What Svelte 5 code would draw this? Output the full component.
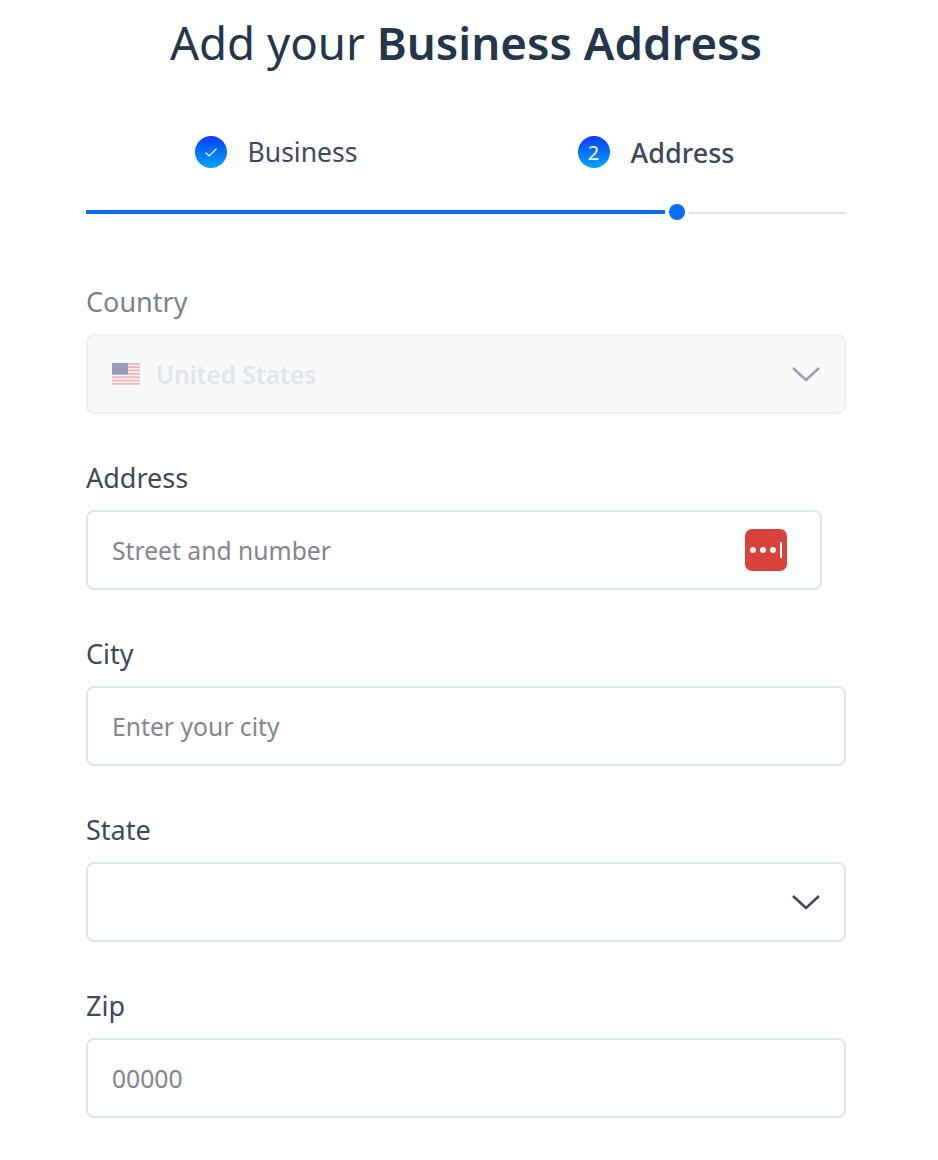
<script lang="ts">
  const usStripes = [0, 2, 4, 6, 8, 10, 12];
</script>

<div class="page">
  <h1>Add your <strong>Business Address</strong></h1>

  <div class="steps">
    <div class="step">
      <span class="badge">
        <svg width="14" height="14" viewBox="0 0 14 14" fill="none">
          <path d="M1.5 7.5 L5.2 11 L12.5 3.8" stroke="#fff" stroke-width="1.2" />
        </svg>
      </span>
      <span class="step-name">Business</span>
    </div>
    <div class="step">
      <span class="badge">2</span>
      <span class="step-name current">Address</span>
    </div>
  </div>

  <div class="progress">
    <div class="bar-done"></div>
    <div class="dot"></div>
    <div class="bar-rest"></div>
  </div>

  <form class="form">
    <div class="field">
      <div class="label muted">Country</div>
      <div class="control disabled">
        <svg class="flag" width="28" height="22" viewBox="0 0 28 22">
          <rect width="28" height="22" fill="#f8f0f0" />
          {#each usStripes as y}
            <rect x="0" y={y * 1.67} width="28" height="1.6" fill="#eab4b4" />
          {/each}
          <rect width="16" height="11.6" fill="#979db8" />
        </svg>
        <span class="value">United States</span>
        <svg class="chevron" width="30" height="18" viewBox="0 0 30 18" fill="none">
          <path d="M2 3 L15 15 L28 3" stroke="#9c9fb0" stroke-width="2.6" />
        </svg>
      </div>
    </div>

    <div class="field">
      <div class="label">Address</div>
      <div class="control short">
        <span class="placeholder">Street and number</span>
        <span class="lastpass">
          <i></i><i></i><i></i><b></b>
        </span>
      </div>
    </div>

    <div class="field">
      <div class="label">City</div>
      <div class="control">
        <span class="placeholder">Enter your city</span>
      </div>
    </div>

    <div class="field">
      <div class="label">State</div>
      <div class="control">
        <svg class="chevron" width="30" height="18" viewBox="0 0 30 18" fill="none">
          <path d="M2 3 L15 15 L28 3" stroke="#42475f" stroke-width="2.6" />
        </svg>
      </div>
    </div>

    <div class="field">
      <div class="label">Zip</div>
      <div class="control">
        <span class="placeholder">00000</span>
      </div>
    </div>
  </form>
</div>

<style>
  :global(body) {
    margin: 0;
    background: #fff;
    font-family: "Noto Sans", "Open Sans", sans-serif;
  }

  .page {
    width: 760px;
    height: 1160px;
    margin-left: 86px;
    overflow: hidden;
  }

  h1 {
    margin: 0;
    height: 84px;
    line-height: 84px;
    text-align: center;
    font-size: 45.6px;
    font-weight: 400;
    color: #25364a;
  }

  h1 strong {
    font-weight: 600;
  }

  .steps {
    display: flex;
    height: 36px;
    margin-top: 50px;
  }

  .step {
    flex: 1;
    display: flex;
    align-items: center;
    justify-content: center;
    gap: 21px;
  }

  .badge {
    width: 32px;
    height: 32px;
    border-radius: 50%;
    display: flex;
    align-items: center;
    justify-content: center;
    background: linear-gradient(180deg, #0a3df5, #00a6ff);
    color: #fff;
    font-size: 20px;
  }

  .step-name {
    font-size: 26.5px;
    color: #42475f;
  }

  .step-name.current {
    font-size: 27px;
    font-weight: 500;
  }

  .progress {
    display: flex;
    align-items: center;
    gap: 4px;
    height: 16px;
    margin-top: 34px;
  }

  .bar-done {
    width: 579px;
    height: 4px;
    background: #0a6ef5;
  }

  .dot {
    width: 16px;
    height: 16px;
    border-radius: 50%;
    background: #0a6ef5;
  }

  .bar-rest {
    flex: 1;
    height: 2px;
    margin-top: 2px;
    background: #dde3e6;
  }

  .form {
    display: flex;
    flex-direction: column;
    gap: 44px;
    margin-top: 62px;
  }

  .label {
    height: 52px;
    line-height: 40px;
    font-size: 27px;
    color: #42475f;
  }

  .label.muted {
    color: #7d7f8e;
  }

  .field {
    display: flex;
    flex-direction: column;
  }

  .control {
    box-sizing: border-box;
    height: 80px;
    border: 2px solid #dde6e8;
    border-radius: 8px;
    display: flex;
    align-items: center;
    padding: 0 24px;
    position: relative;
    background: #fff;
  }

  .control.short {
    width: 736px;
  }

  .control.disabled {
    background: #f8f9fb;
    border-color: #edf1f3;
  }

  .flag {
    margin-right: 16px;
  }

  .value {
    font-size: 24.4px;
    font-weight: 600;
    color: #e1e5ec;
  }

  .placeholder {
    font-size: 24.7px;
    color: #84868f;
  }

  .chevron {
    position: absolute;
    right: 23px;
    top: 29px;
  }

  .lastpass {
    position: absolute;
    right: 33px;
    top: 17px;
    width: 42px;
    height: 42px;
    border-radius: 7px;
    background: #d9423b;
    display: flex;
    align-items: center;
    justify-content: center;
    gap: 4px;
  }

  .lastpass i {
    width: 6px;
    height: 6px;
    border-radius: 50%;
    background: #fff;
  }

  .lastpass b {
    width: 2px;
    height: 16px;
    background: #fff;
  }
</style>
